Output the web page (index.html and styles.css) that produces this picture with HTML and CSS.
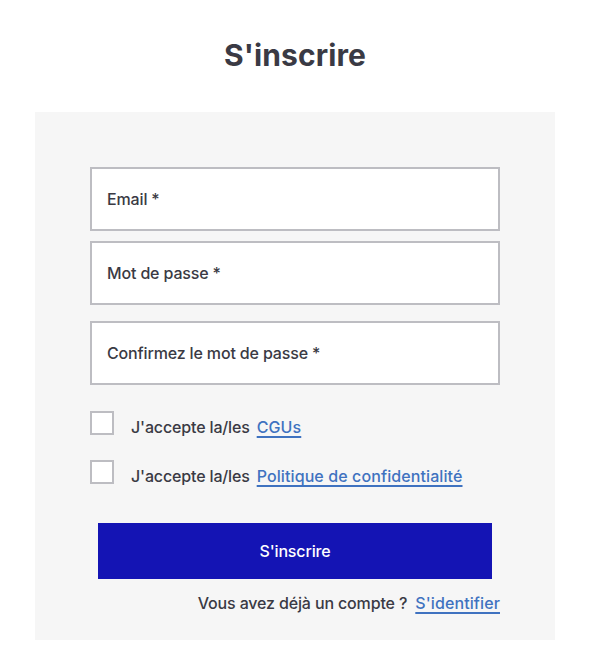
FILE: index.html
```html
<!DOCTYPE html>
<html lang="fr">
<head>
<meta charset="utf-8">
<title>S'inscrire</title>
<link rel="stylesheet" href="styles.css">
</head>
<body>
<main class="page">
  <h1 class="title">S'inscrire</h1>
  <section class="panel">
    <form class="form">
      <label class="field field-first"><span class="field-label">Email *</span></label>
      <label class="field field-second"><span class="field-label">Mot de passe *</span></label>
      <label class="field field-third"><span class="field-label">Confirmez le mot de passe *</span></label>
      <div class="check check-first">
        <span class="box"></span>
        <span class="check-text">J'accepte la/les</span>
        <a class="link" href="#">CGUs</a>
      </div>
      <div class="check check-second">
        <span class="box"></span>
        <span class="check-text">J'accepte la/les</span>
        <a class="link" href="#">Politique de confidentialité</a>
      </div>
      <button class="submit" type="button">S'inscrire</button>
      <p class="login">Vous avez déjà un compte ? <a class="link" href="#">S'identifier</a></p>
    </form>
  </section>
</main>
</body>
</html>
```
FILE: styles.css
```css
* { box-sizing: border-box; }
html, body { margin: 0; padding: 0; background: #ffffff; }
body {
  font-family: "Inter", "Noto Sans", sans-serif;
  color: #3a3a44;
}
.page {
  width: 520px;
  margin: 0 0 0 35px;
  padding-top: 36px;
}
.title {
  margin: 0 0 38px;
  text-align: center;
  font-size: 30px;
  line-height: 38px;
  font-weight: 700;
  letter-spacing: 0.1px;
  color: #3a3a44;
}
.panel {
  background: #f6f6f6;
  padding: 55px 55px 20px;
  height: 528px;
}
.form { display: flex; flex-direction: column; letter-spacing: -0.15px; }
.field {
  display: flex;
  align-items: center;
  height: 64px;
  border: 2px solid #bdbdc2;
  background: #ffffff;
  padding-left: 15px;
}
.field-second { margin-top: 10px; }
.field-third { margin-top: 16px; }
.field-label {
  font-size: 16px;
  font-weight: 500;
  color: #3a3a44;
}
.check {
  display: flex;
  align-items: center;
  height: 24px;
  font-size: 16px;
  font-weight: 500;
}
.check-first { margin-top: 26px; }
.check-second { margin-top: 25px; }
.box {
  width: 24px;
  height: 24px;
  border: 2px solid #bdbdc2;
  background: #ffffff;
  margin-right: 17px;
  flex: none;
}
.check-text { margin-right: 7px; position: relative; top: 4px; }
.check .link { position: relative; top: 4px; }
.link {
  color: #3f72c0;
  text-decoration: underline;
  text-underline-offset: 3px;
  text-decoration-thickness: 2px;
  font-weight: 500;
  letter-spacing: 0.1px;
}
.submit {
  margin: 39px 8px 0;
  height: 56px;
  border: none;
  background: #1414b4;
  color: #ffffff;
  font-family: inherit;
  font-size: 16px;
  font-weight: 500;
  letter-spacing: -0.15px;
}
.login {
  margin: 14px 0 0;
  text-align: right;
  font-size: 16px;
  font-weight: 500;
  line-height: 20px;
}
.login .link { margin-left: 4px; }
```
